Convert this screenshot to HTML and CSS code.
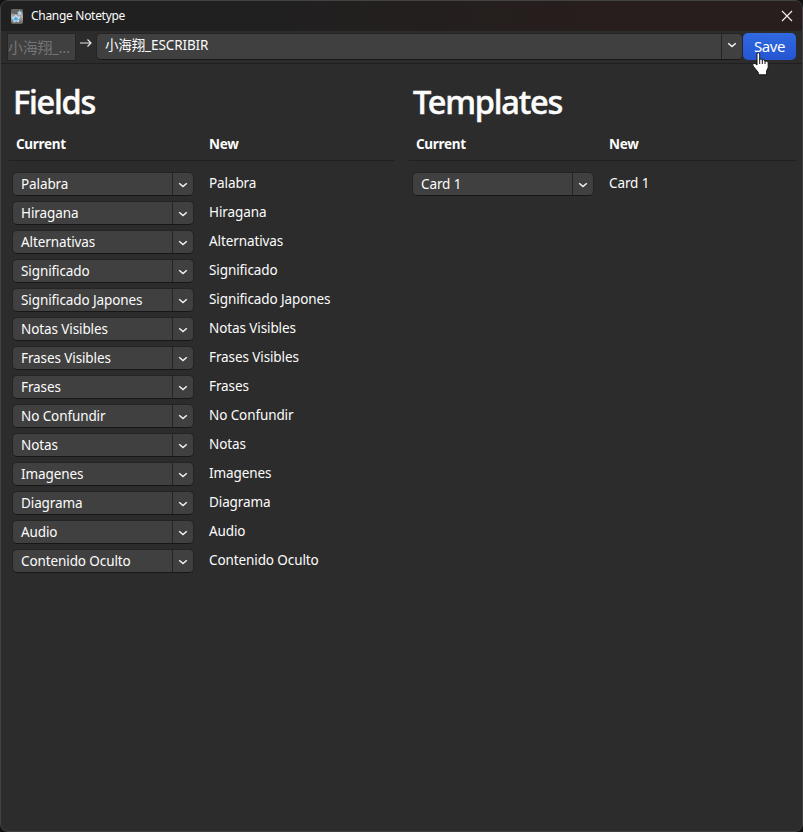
FILE: index.html
```html
<!DOCTYPE html>
<html lang="es">
<head>
<meta charset="utf-8">
<title>Change Notetype</title>
<link rel="stylesheet" href="styles.css">
</head>
<body>
<svg width="0" height="0" class="defs"><symbol id="chev" viewBox="0 0 10 6"><path d="M1.2 1.2 5 4.6 8.8 1.2" fill="none" stroke="#f0f0f0" stroke-width="1.5"/></symbol></svg>
<div class="window">
  <header class="titlebar">
    <svg class="app" width="12" height="15" viewBox="0 0 12 15"><defs><linearGradient id="g" x1="0" y1="0" x2="0" y2="1"><stop offset="0" stop-color="#5c5c5c"/><stop offset=".5" stop-color="#b0b0b0"/><stop offset="1" stop-color="#606060"/></linearGradient></defs><rect width="12" height="15" rx="2" fill="url(#g)"/><path d="M0 4Q5 6 12 4V2Q12 0 10 0H2Q0 0 0 2Z" fill="#666"/><path d="m4.8 6.200 1.200 2 2.600.1-1.600 2 .6 2.500-2.500-1-2.200 1.300.1-2.600L1.200 9l2.500-.7z" fill="#45aef4" stroke="#e8f4fc" stroke-width=".9"/><path d="m8.600 1.700.7 1.200 1.500.1-.8 1.300.4 1.400-1.500-.6-1.300.8V4.400l-1.100-1 1.500-.4z" fill="#a5d8f8" stroke="#e4eef5" stroke-width=".4"/></svg>
    <span class="caption">Change Notetype</span>
    <svg class="close" width="12" height="12" viewBox="0 0 12 12"><path d="m1 1 10 10M11 1 1 11" stroke="#eee" stroke-width="1.2"/></svg>
  </header>
  <div class="toolbar">
    <div class="old">小海翔_...</div>
    <svg class="arrow" width="14" height="10" viewBox="0 0 14 10"><path d="M1 5H12M8.500 1.500 12 5 8.500 8.500" fill="none" stroke="#e4e4e4" stroke-width="1.200"/></svg>
    <div class="select main"><span>小海翔_ESCRIBIR</span><i><svg width="10" height="6"><use href="#chev"/></svg></i></div>
    <button class="save">Save</button>
  </div>
  <main class="panels">
    <section>
      <h1>Fields</h1>
      <div class="row head"><b>Current</b><b>New</b></div>
      <div class="rows" id="fields"></div>
    </section>
    <section>
      <h1>Templates</h1>
      <div class="row head"><b>Current</b><b>New</b></div>
      <div class="rows" id="templates"></div>
    </section>
  </main>
  <svg class="cursor" width="18" height="24" viewBox="0 0 18 24"><path d="M5 2.200Q5 .7 6.300.7T7.700 2.200V7.500Q8.800 6.200 10.200 7.600V8.200Q11.700 7 13 8.700V9.300Q14.800 8.300 16.200 10.600V15.500L14.600 19V22.800H6.300V20.500L1.300 14.300Q.1 12.600 1.500 11.600T5 13Z" fill="#fff" stroke="#151515"/><path d="M7.700 7V12M10.300 8V12M13 9V12" stroke="#151515"/></svg>
</div>
<script src="script.js"></script>
</body>
</html>
```
FILE: styles.css
```css
* { box-sizing: border-box; }
body { margin: 0; background: #111; color: #fcfcfc; font: 13.5px/20px "Noto Sans", "Noto Sans CJK SC", sans-serif; letter-spacing: -0.1px; }
.defs { position: absolute; }
.window { position: relative; width: 803px; height: 832px; overflow: hidden; border: 1px solid #424242; border-radius: 8px; background: #2c2c2c; }
.titlebar { display: flex; align-items: center; height: 30px; padding: 0 10px; background: linear-gradient(90deg, #202020 0, #202020 30%, #271e1d 75%); }
.caption { margin-left: 8px; font-size: 12px; letter-spacing: -0.3px; }
.close { margin-left: auto; margin-right: -1px; }
.toolbar { display: flex; height: 33px; padding: 2px 6px 0; border-bottom: 1px solid #202020; }
.old { width: 69px; height: 28px; border: 1px solid #252525; background: #404040; color: #747474; font-size: 15px; letter-spacing: -0.3px; line-height: 26px; white-space: nowrap; overflow: hidden; }
.arrow { flex: none; margin: 5px 4px 0 3px; }
.select { display: flex; width: 182px; height: 24px; margin-left: -1px; border: 1px solid #242424; border-bottom-color: #171717; border-radius: 5px; background: #404040; line-height: 23px; }
.select span { flex: 1; padding-left: 8px; white-space: nowrap; }
.select i { display: flex; align-items: center; justify-content: center; width: 21px; border-left: 1px solid #242424; }
.select i svg { margin-top: 2px; }
.main { width: 648px; height: 27px; line-height: 22px; }
.main i svg { margin-top: -3px; }
.save { width: 53px; height: 27px; margin: 0; padding: 0; border: 0; border-radius: 5px; background: linear-gradient(#3069e2, #2555d2); color: #fff; font: 15px/27px "Noto Sans", sans-serif; letter-spacing: -0.4px; }
.panels { display: grid; grid-template-columns: 385px 388px; column-gap: 15px; padding: 16px 0 0 8px; }
h1 { margin: 0; padding-left: 4px; font: 500 32.5px/44px "Noto Sans", sans-serif; letter-spacing: -1.2px; -webkit-text-stroke: 0.5px #fcfcfc; }
.row { display: grid; grid-template-columns: 196px 1fr; height: 29px; padding-left: 4px; }
.head { height: 37px; padding-top: 10px; margin-bottom: 11px; border-bottom: 1px solid #202020; line-height: 20px; letter-spacing: -0.3px; }
.head b:first-child { padding-left: 3px; }
.row > span { line-height: 22px; }
.cursor { position: absolute; left: 751px; top: 51px; }
```
FILE: script.js
```js
const fields = ["Palabra", "Hiragana", "Alternativas", "Significado", "Significado Japones", "Notas Visibles", "Frases Visibles", "Frases", "No Confundir", "Notas", "Imagenes", "Diagrama", "Audio", "Contenido Oculto"];
const row = name => `<div class="row"><div class="select"><span>${name}</span><i><svg width="10" height="6"><use href="#chev"/></svg></i></div><span>${name}</span></div>`;
document.getElementById("fields").innerHTML = fields.map(row).join("");
document.getElementById("templates").innerHTML = row("Card 1");
```
